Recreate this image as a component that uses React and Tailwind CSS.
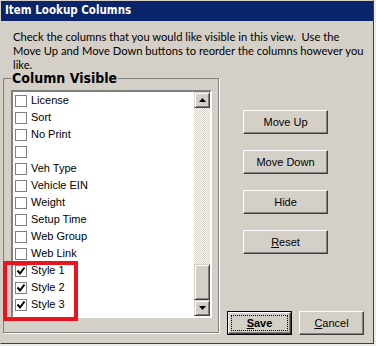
const items = [
  ["License", false],
  ["Sort", false],
  ["No Print", false],
  ["", false],
  ["Veh Type", false],
  ["Vehicle EIN", false],
  ["Weight", false],
  ["Setup Time", false],
  ["Web Group", false],
  ["Web Link", false],
  ["Style 1", true],
  ["Style 2", true],
  ["Style 3", true],
];

function Btn({ children, def }) {
  if (def) {
    return (
      <div className="w-[65px] h-[24px] border border-black">
        <div className="w-full h-full border border-t-white border-l-white border-r-[#404040] border-b-[#404040] shadow-[inset_-1px_-1px_0_#808080] flex items-center justify-center p-[2px]">
          <div className="w-full h-full border border-dotted border-black flex items-center justify-center">
            {children}
          </div>
        </div>
      </div>
    );
  }
  return (
    <div className="h-[24px] border border-t-white border-l-white border-r-[#404040] border-b-[#404040] shadow-[inset_-1px_-1px_0_#808080] flex items-center justify-center">
      {children}
    </div>
  );
}

function ScrollBtn({ down }) {
  return (
    <div className="h-[16px] shrink-0 border border-t-[#d4d0c8] border-l-[#d4d0c8] border-r-[#404040] border-b-[#404040] shadow-[inset_1px_1px_0_#fff,inset_-1px_-1px_0_#808080] bg-[#d4d0c8] flex items-center justify-center">
      <svg width="7" height="4" viewBox="0 0 7 4">
        {down ? <polygon points="0,0 7,0 3.5,4" fill="#000" /> : <polygon points="3.5,0 7,4 0,4" fill="#000" />}
      </svg>
    </div>
  );
}

export default function App() {
  return (
    <div className="w-[376px] h-[346px] bg-[#ecebe6]" style={{ fontFamily: '"Liberation Sans", Arial, sans-serif' }}>
      <div className="relative w-[374px] h-[344px] bg-[#d4d0c8] border border-t-[#d4d0c8] border-l-[#d4d0c8] border-r-[#404040] border-b-[#404040] flex flex-col">
        <div className="h-[20px] bg-[#0a246a] text-white font-bold text-[11.5px] pl-[4px] flex items-center" style={{ fontFamily: '"DejaVu Sans Condensed", "DejaVu Sans", sans-serif' }}>
          Item Lookup Columns
        </div>
        <div className="pl-[12px] pt-[9px] h-[49px] text-[11.2px] leading-[14px] text-black whitespace-nowrap" style={{ fontFamily: 'Lato, sans-serif' }}>
          Check the columns that you would like visible in this view.&nbsp; Use the<br />
          Move Up and Move Down buttons to reorder the columns however you<br />
          like.
        </div>
        <div className="flex">
          <fieldset className="ml-[2px] w-[216px] h-[263px] border border-[#808080] shadow-[1px_1px_0_#fff] pl-[7px]">
            <legend className="px-[1px] text-[14px] leading-[16px] font-bold text-black" style={{ fontFamily: '"DejaVu Sans Condensed", "DejaVu Sans", sans-serif' }}>
              Column Visible
            </legend>
            <div className="mt-[4px] w-[201px] h-[228px] border-2 border-t-[#808080] border-l-[#808080] border-r-white border-b-white bg-white flex">
              <div className="flex-1 flex flex-col">
                {items.map(([label, checked], i) => (
                  <div key={i} className="h-[17px] flex items-center pl-[2px]">
                    <div className="w-[12px] h-[12px] border border-[#808080] bg-white flex items-center justify-center">
                      {checked && (
                        <svg width="10" height="10" viewBox="0 0 10 10">
                          <polyline points="1.5,4.5 4,7.5 8.5,1.5" fill="none" stroke="#000" strokeWidth="2" />
                        </svg>
                      )}
                    </div>
                    <span className="ml-[4px] text-[11px] text-black">{label}</span>
                  </div>
                ))}
              </div>
              <div className="w-[16px] flex flex-col">
                <ScrollBtn />
                <div className="flex-1 bg-[conic-gradient(#fff_25%,#d4d0c8_0_50%,#fff_0_75%,#d4d0c8_0)] bg-[length:2px_2px]" />
                <div className="h-[36px] shrink-0 border border-t-[#d4d0c8] border-l-[#d4d0c8] border-r-[#404040] border-b-[#404040] shadow-[inset_1px_1px_0_#fff,inset_-1px_-1px_0_#808080] bg-[#d4d0c8]" />
                <ScrollBtn down />
              </div>
            </div>
          </fieldset>
          <div className="flex-1 flex flex-col text-[11px] text-black">
            <div className="ml-[24px] w-[85px] mt-[40px] flex flex-col gap-[16px]">
              <Btn>Move Up</Btn>
              <Btn>Move Down</Btn>
              <Btn>Hide</Btn>
              <Btn><span><span className="underline">R</span>eset</span></Btn>
            </div>
            <div className="ml-[8px] mt-[57px] flex gap-[7px]">
              <Btn def><span className="font-bold"><span className="underline">S</span>ave</span></Btn>
              <div className="w-[65px]">
                <Btn><span><span className="underline">C</span>ancel</span></Btn>
              </div>
            </div>
          </div>
        </div>
        <div className="absolute left-[2px] top-[260px] w-[75px] h-[60px] border-[4px] border-[#e8151f]" />
      </div>
    </div>
  );
}
